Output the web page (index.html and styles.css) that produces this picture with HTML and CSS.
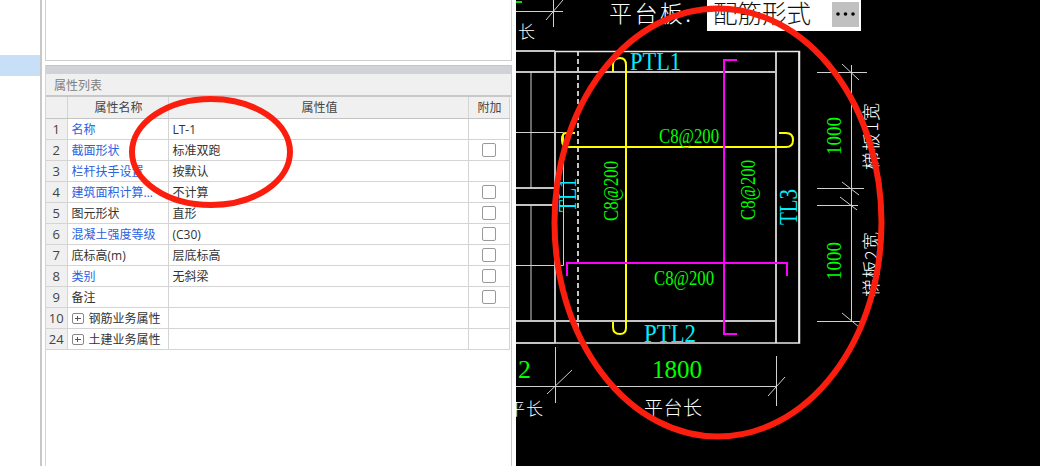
FILE: index.html
```html
<!DOCTYPE html>
<html lang="zh-CN">
<head>
<meta charset="utf-8">
<title>属性列表</title>
<link rel="stylesheet" href="styles.css">
</head>
<body>
<div class="app">
  <aside class="sidebar"><div class="sidebar-selected"></div></aside>
  <main class="panels">
    <section class="blank-panel"></section>
    <section class="props">
      <div class="props-band"></div>
      <div class="props-title">属性列表</div>
      <table class="grid">
        <colgroup><col class="c-num"><col class="c-name"><col class="c-val"><col class="c-add"></colgroup>
        <thead>
          <tr><th></th><th>属性名称</th><th>属性值</th><th>附加</th></tr>
        </thead>
        <tbody>
          <tr><td class="num">1</td><td class="link">名称</td><td>LT-1</td><td></td></tr>
          <tr><td class="num">2</td><td class="link">截面形状</td><td>标准双跑</td><td class="chk"><span class="box"></span></td></tr>
          <tr><td class="num">3</td><td class="link">栏杆扶手设置</td><td>按默认</td><td></td></tr>
          <tr><td class="num">4</td><td class="link">建筑面积计算...</td><td>不计算</td><td class="chk"><span class="box"></span></td></tr>
          <tr><td class="num">5</td><td>图元形状</td><td>直形</td><td class="chk"><span class="box"></span></td></tr>
          <tr><td class="num">6</td><td class="link">混凝土强度等级</td><td>(C30)</td><td class="chk"><span class="box"></span></td></tr>
          <tr><td class="num">7</td><td>底标高(m)</td><td>层底标高</td><td class="chk"><span class="box"></span></td></tr>
          <tr><td class="num">8</td><td class="link">类别</td><td>无斜梁</td><td class="chk"><span class="box"></span></td></tr>
          <tr><td class="num">9</td><td>备注</td><td></td><td class="chk"><span class="box"></span></td></tr>
          <tr><td class="num">10</td><td class="group"><span class="plus"></span>钢筋业务属性</td><td></td><td></td></tr>
          <tr><td class="num">24</td><td class="group"><span class="plus"></span>土建业务属性</td><td></td><td></td></tr>
        </tbody>
      </table>
    </section>
  </main>
  <div class="gutter"></div>
  <div class="cad">
    <svg class="cad-svg" width="524" height="466" viewBox="516 0 524 466">
      <g class="ln-thick">
        <path d="M516 51H555M516 72H776M516 321H776M516 188H555M516 205H555M555 51V343M776 51V343M799 51V343M516 343H555"/>
      </g>
      <path class="ln-dash" d="M578 51V328"/>
      <g class="ln-white">
        <path d="M555 51.5H799.5V343H555"/>
      </g>
      <g class="ln-thin">
        <path d="M531 72V188M531 205V321M516 132.5H563.5V265.5H516"/>
        <path d="M516 11.5H563M553.5 0V27M546 20L563 0"/>
        <path d="M516 386.5H776M555.5 347V403M776.5 356V406M547 394L572 370M768 396L785 377"/>
        <path d="M851.5 65V322M817 72.5H867M817 188.5H864M817 205.5H858M817 321.5H862M842 64L859 80M842 182L859 195M840 197L857 210M842 313L859 327"/>
      </g>
      <path class="ln-green" d="M516 2H522"/>
      <g class="ln-yellow">
        <path d="M613 72V65Q613 58 620 58Q626 58 626 65V328Q626 334 620 334Q613 334 613 327V322"/>
        <path d="M575 133H566Q562 133 562 140Q562 147 568 147H786Q793 147 793 140Q793 133 786 133H779"/>
      </g>
      <g class="ln-magenta">
        <path d="M737 60H724V334H737"/>
        <path d="M567 276V263H787V276"/>
      </g>
      <rect class="white-box" x="707" y="0" width="154" height="31"/>
      <rect class="more-btn" x="832" y="2" width="27" height="25"/>
      <circle cx="838" cy="14" r="1.8"/><circle cx="845.500" cy="14" r="1.8"/><circle cx="853" cy="14" r="1.8"/>
      <text class="t-cjk t-white" x="609" y="22" font-size="23" textLength="82">平台板:</text>
      <text class="t-cjk t-black" x="713" y="23" font-size="24.500">配筋形式</text>
      <text class="t-cjk t-white" x="518" y="38" font-size="17">长</text>

      <text class="t-cad t-cyan" x="630" y="70" font-size="25" textLength="51" lengthAdjust="spacingAndGlyphs">PTL1</text>
      <text class="t-cad t-cyan" x="644" y="342" font-size="25" textLength="52" lengthAdjust="spacingAndGlyphs">PTL2</text>
      <text class="t-cad t-green" x="659" y="143" font-size="21" textLength="60" lengthAdjust="spacingAndGlyphs">C8@200</text>
      <text class="t-cad t-green" x="654" y="285" font-size="21" textLength="60" lengthAdjust="spacingAndGlyphs">C8@200</text>
      <text class="t-cad t-green" x="652" y="378" font-size="26" textLength="50" lengthAdjust="spacingAndGlyphs">1800</text>
      <text class="t-cad t-green" x="518" y="378" font-size="26" textLength="13" lengthAdjust="spacingAndGlyphs">2</text>

      <text class="t-cad t-green" transform="translate(618 221) rotate(-90)" font-size="21" textLength="60" lengthAdjust="spacingAndGlyphs">C8@200</text>
      <text class="t-cad t-green" transform="translate(755 220) rotate(-90)" font-size="21" textLength="60" lengthAdjust="spacingAndGlyphs">C8@200</text>
      <text class="t-cad t-cyan" transform="translate(576 212) rotate(-90)" font-size="25" textLength="34" lengthAdjust="spacingAndGlyphs">TL1</text>
      <text class="t-cad t-cyan" transform="translate(797 225) rotate(-90)" font-size="26" textLength="36" lengthAdjust="spacingAndGlyphs">TL3</text>
      <text class="t-cad t-green" transform="translate(841 155) rotate(-90)" font-size="22" textLength="38" lengthAdjust="spacingAndGlyphs">1000</text>
      <text class="t-cad t-green" transform="translate(841 280) rotate(-90)" font-size="22" textLength="38" lengthAdjust="spacingAndGlyphs">1000</text>

      <text class="t-cjk t-white" transform="translate(878 170) rotate(-90)" font-size="18" textLength="67">梯板1宽</text>
      <text class="t-cjk t-white" transform="translate(878 297) rotate(-90)" font-size="18" textLength="65">梯板2宽</text>
      <text class="t-cjk t-white" x="644" y="415" font-size="19" textLength="58">平台长</text>
      <text class="t-cjk t-white" x="508" y="415" font-size="17" textLength="35">平长</text>
    </svg>
  </div>
  <svg class="marks" width="1040" height="466" viewBox="0 0 1040 466" aria-hidden="true">
    <ellipse cx="211" cy="152" rx="79" ry="53"/>
    <ellipse cx="718" cy="222.500" rx="163.500" ry="214"/>
  </svg>
</div>
</body>
</html>
```
FILE: styles.css
```css
* { box-sizing: border-box; }
html, body { margin: 0; height: 100%; background: #fff; overflow: hidden; }
body { font: 12px/1 "Open Sans", "Noto Sans CJK SC", sans-serif; color: #333; }

.app { position: relative; display: flex; width: 1040px; height: 466px; overflow: hidden; background: #fff; }

.sidebar { width: 42px; flex: none; padding-top: 55px; border-right: 2px solid #c8c8c8; }
.sidebar-selected { height: 21px; background: #c8dff8; }

.panels { width: 467px; margin-left: 3px; flex: none; display: flex; flex-direction: column; gap: 4px; }
.blank-panel { height: 61px; flex: none; border: 1px solid #cfcfcf; border-top: 0; background: #fff; }

.props { flex: 1; border-left: 1px solid #d4d4d4; border-right: 1px solid #c8c8c8; }
.props-band { height: 9px; background: #d0d2d8; border-top: 1px solid #c4c6cc; }
.props-title { height: 23px; padding-left: 8px; background: #f0f0f0; color: #808080; line-height: 24px; font-size: 12px; border-bottom: 2px solid #c8c8c8; }

.grid { border-collapse: collapse; table-layout: fixed; width: 463px; }
.c-num { width: 21px; }
.c-name { width: 101px; }
.c-val { width: 300px; }
.c-add { width: 41px; }

.grid th, .grid td { height: 21px; padding: 2px 3px 0 4px; border: 1px solid #d4d4d4; border-left-width: 0; text-align: left; font-weight: 400; white-space: nowrap; overflow: hidden; }
.grid th { padding: 2px 3px 0 5px; background: #f0f0f0; border-bottom-color: #c4c4c4; text-align: center; color: #444; border-top: 0; }
.grid th:nth-child(3) { padding-left: 6px; }
.grid td.num { background: #f0f0f0; color: #444; text-align: center; font-size: 13px; padding: 1px 0 0; }
.grid td.link { color: #2a62e0; }
.grid td.group { color: #333; }
.grid td.chk { text-align: center; padding: 0; line-height: 0; }

.box { display: inline-block; width: 14px; height: 14px; border: 1px solid #999; border-radius: 2px; background: #fff; vertical-align: middle; }

.plus { position: relative; display: inline-block; width: 12px; height: 11px; margin-right: 5px; border: 1px solid #888; border-radius: 2px; vertical-align: -1px; }
.plus::before { content: ""; position: absolute; left: 2px; right: 2px; top: 4px; height: 1px; background: #555; }
.plus::after { content: ""; position: absolute; top: 2px; bottom: 2px; left: 4.500px; width: 1px; background: #555; }

.gutter { width: 4px; flex: none; }

.cad { flex: 1; background: #000; overflow: hidden; }
.cad-svg { display: block; }
.cad-svg circle { fill: #000; }

.ln-thick path { fill: none; stroke: #c4c4c4; stroke-width: 2; }
.ln-dash { fill: none; stroke: #c4c4c4; stroke-width: 2; stroke-dasharray: 5 3; }
.ln-white path { fill: none; stroke: #e8e8e8; stroke-width: 1.500; }
.ln-thin path { fill: none; stroke: #d0d0d0; stroke-width: 1; }
.ln-green { fill: none; stroke: #00e000; stroke-width: 2; }
.ln-yellow path { fill: none; stroke: #ffff00; stroke-width: 2; }
.ln-magenta path { fill: none; stroke: #ff00ff; stroke-width: 2; }
.white-box { fill: #fff; }
.more-btn { fill: #c0c0c0; }

.t-cad { font-family: "Liberation Serif", serif; }
.t-cjk { font-family: "Noto Sans CJK SC", sans-serif; font-weight: 300; }
.t-white { fill: #fff; }
.t-black { fill: #111; }
.t-cyan { fill: #00f0ff; }
.t-green { fill: #00ff00; }

.marks { position: absolute; left: 0; top: 0; pointer-events: none; }
.marks ellipse { fill: none; stroke: #fb1e0e; stroke-width: 6; }
```
